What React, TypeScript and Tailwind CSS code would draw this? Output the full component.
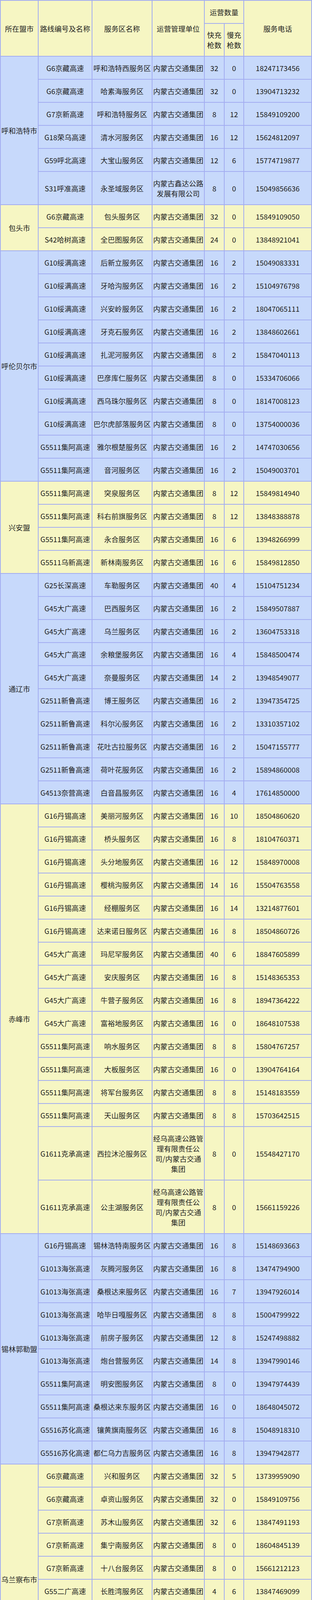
import React from 'react';

type Text = string | string[];
type Row = [string, string, Text, number, number, Text];

interface Region {
  name: string;
  tone: 'blue' | 'yellow';
  tall?: boolean;
  marked?: boolean;
  rows: Row[];
}

const JT = '内蒙古交通集团';
const JINGWU = ['经乌高速公路管', '理有限责任公', '司/内蒙古交通', '集团'];
const TAIBAO = ['鄂尔多斯市泰宝', '投资有限责任', '公司'];
const ZHENGHUI = ['鄂尔多斯市政汇', '公路管理有限', '公司'];
const XINCHI = ['鄂尔多斯市新驰', '路桥开发有限', '公司'];
const YANHUANG = ['鄂尔多斯市沿黄', '高等级公路建设', '开发有限公司'];

const regions: Region[] = [
  {
    name: '呼和浩特市',
    tone: 'blue',
    rows: [
      ['G6京藏高速', '呼和浩特西服务区', JT, 32, 0, '18247173456'],
      ['G6京藏高速', '哈素海服务区', JT, 32, 0, '13904713232'],
      ['G7京新高速', '呼和浩特服务区', JT, 8, 12, '15849109200'],
      ['G18荣乌高速', '清水河服务区', JT, 16, 12, '15624812097'],
      ['G59呼北高速', '大宝山服务区', JT, 12, 6, '15774719877'],
      ['S31呼准高速', '永圣域服务区', ['内蒙古鑫达公路', '发展有限公司'], 8, 0, '15049856636'],
    ],
  },
  {
    name: '包头市',
    tone: 'yellow',
    rows: [
      ['G6京藏高速', '包头服务区', JT, 32, 0, '15849109050'],
      ['S42哈树高速', '全巴图服务区', JT, 24, 0, '13848921041'],
    ],
  },
  {
    name: '呼伦贝尔市',
    tone: 'blue',
    rows: [
      ['G10绥满高速', '后新立服务区', JT, 16, 2, '15049083331'],
      ['G10绥满高速', '牙哈沟服务区', JT, 16, 2, '15104976798'],
      ['G10绥满高速', '兴安岭服务区', JT, 16, 2, '18047065111'],
      ['G10绥满高速', '牙克石服务区', JT, 16, 2, '13848602661'],
      ['G10绥满高速', '扎泥河服务区', JT, 8, 2, '15847040113'],
      ['G10绥满高速', '巴彦库仁服务区', JT, 8, 0, '15334706066'],
      ['G10绥满高速', '西乌珠尔服务区', JT, 8, 0, '18147008123'],
      ['G10绥满高速', '巴尔虎部落服务区', JT, 8, 0, '13754000036'],
      ['G5511集阿高速', '雅尔根楚服务区', JT, 16, 2, '14747030656'],
      ['G5511集阿高速', '音河服务区', JT, 16, 2, '15049003701'],
    ],
  },
  {
    name: '兴安盟',
    tone: 'yellow',
    rows: [
      ['G5511集阿高速', '突泉服务区', JT, 8, 12, '15849814940'],
      ['G5511集阿高速', '科右前旗服务区', JT, 8, 12, '13848388878'],
      ['G5511集阿高速', '永合服务区', JT, 16, 6, '13948266999'],
      ['G5511乌新高速', '新林南服务区', JT, 16, 6, '15849812850'],
    ],
  },
  {
    name: '通辽市',
    tone: 'blue',
    rows: [
      ['G25长深高速', '车勒服务区', JT, 40, 4, '15104751234'],
      ['G45大广高速', '巴西服务区', JT, 16, 2, '15849507887'],
      ['G45大广高速', '乌兰服务区', JT, 16, 2, '13604753318'],
      ['G45大广高速', '余粮堡服务区', JT, 16, 4, '15848500474'],
      ['G45大广高速', '奈曼服务区', JT, 14, 2, '13948549077'],
      ['G2511新鲁高速', '博王服务区', JT, 16, 2, '13947354725'],
      ['G2511新鲁高速', '科尔沁服务区', JT, 16, 2, '13310357102'],
      ['G2511新鲁高速', '花吐古拉服务区', JT, 16, 2, '15047155777'],
      ['G2511新鲁高速', '荷叶花服务区', JT, 16, 2, '15894860008'],
      ['G4513奈营高速', '白音昌服务区', JT, 16, 4, '17614850000'],
    ],
  },
  {
    name: '赤峰市',
    tone: 'yellow',
    rows: [
      ['G16丹锡高速', '美丽河服务区', JT, 16, 10, '18504860620'],
      ['G16丹锡高速', '桥头服务区', JT, 16, 8, '18104760371'],
      ['G16丹锡高速', '头分地服务区', JT, 16, 12, '15848970008'],
      ['G16丹锡高速', '樱桃沟服务区', JT, 14, 16, '15504763558'],
      ['G16丹锡高速', '经棚服务区', JT, 16, 14, '13214877601'],
      ['G16丹锡高速', '达来诺日服务区', JT, 16, 8, '18504860726'],
      ['G45大广高速', '玛尼罕服务区', JT, 40, 6, '18847605899'],
      ['G45大广高速', '安庆服务区', JT, 16, 8, '15148365353'],
      ['G45大广高速', '牛营子服务区', JT, 16, 8, '18947364222'],
      ['G45大广高速', '富裕地服务区', JT, 16, 0, '18648107538'],
      ['G5511集阿高速', '响水服务区', JT, 8, 8, '15804767257'],
      ['G5511集阿高速', '大板服务区', JT, 16, 0, '13904764164'],
      ['G5511集阿高速', '将军台服务区', JT, 8, 8, '15148183559'],
      ['G5511集阿高速', '天山服务区', JT, 8, 8, '15703642515'],
      ['G1611克承高速', '西拉沐沦服务区', JINGWU, 8, 0, '15548427170'],
      ['G1611克承高速', '公主湖服务区', JINGWU, 8, 0, '15661159226'],
    ],
  },
  {
    name: '锡林郭勒盟',
    tone: 'blue',
    rows: [
      ['G16丹锡高速', '锡林浩特南服务区', JT, 16, 8, '15148693663'],
      ['G1013海张高速', '灰腾河服务区', JT, 16, 8, '13474794900'],
      ['G1013海张高速', '桑根达来服务区', JT, 16, 7, '13947926014'],
      ['G1013海张高速', '哈毕日嘎服务区', JT, 8, 8, '15004799922'],
      ['G1013海张高速', '前房子服务区', JT, 12, 8, '15247498882'],
      ['G1013海张高速', '炮台营服务区', JT, 14, 8, '13947990146'],
      ['G5511集阿高速', '明安图服务区', JT, 8, 0, '13947974439'],
      ['G5511集阿高速', '桑根达来东服务区', JT, 16, 0, '18648045072'],
      ['G5516苏化高速', '镶黄旗南服务区', JT, 16, 8, '15048918310'],
      ['G5516苏化高速', '都仁乌力吉服务区', JT, 16, 8, '13947942877'],
    ],
  },
  {
    name: '乌兰察布市',
    tone: 'yellow',
    rows: [
      ['G6京藏高速', '兴和服务区', JT, 32, 5, '13739959090'],
      ['G6京藏高速', '卓资山服务区', JT, 32, 0, '15849109756'],
      ['G7京新高速', '苏木山服务区', JT, 32, 6, '13847491193'],
      ['G7京新高速', '集宁南服务区', JT, 8, 0, '18604845139'],
      ['G7京新高速', '十八台服务区', JT, 8, 0, '15661212123'],
      ['G55二广高速', '长胜湾服务区', JT, 4, 6, '13847469099'],
      ['G55二广高速', '黄家村服务区', JT, 4, 0, '15344230044'],
      ['G55二广高速', '丰镇服务区', JT, 8, 6, '13847430588'],
      ['G5511集阿高速', '商都西服务区', JT, 16, 0, '15848490707'],
      ['G5511集阿高速', '德包图服务区', JT, 8, 6, '15147479280'],
    ],
  },
  {
    name: '鄂尔多斯市',
    tone: 'blue',
    marked: true,
    rows: [
      ['G65包茂高速', '响沙湾服务区', JT, 32, 0, '13134862233'],
      ['G65包茂高速', '成陵服务区', JT, 16, 18, '15750634131'],
      ['G18荣乌高速', '沙圪堵服务区', TAIBAO, 8, 0, '15044913609'],
      ['G18荣乌高速', '包府服务区', TAIBAO, 8, 0, '15847725101'],
      ['G18荣乌高速', '泊江海服务区', ZHENGHUI, 14, 1, ['15754719422', '15894980090']],
      ['G18荣乌高速', '沙井服务区', ZHENGHUI, 10, 4, '15344048152'],
      ['G18荣乌高速', '框框井服务区', XINCHI, 4, 0, '15149438088'],
      ['G18荣乌高速', '三北羊场服务区', XINCHI, 4, 0, '15149438088'],
      ['S24兴巴高速', '十二连城服务区', YANHUANG, 8, 0, '15947738887'],
      ['S24兴巴高速', '展旦召服务区', YANHUANG, 4, 3, '15247710404'],
      ['S24兴巴高速', '中和西服务区', YANHUANG, 4, 3, '13669900003'],
      ['S24兴巴高速', '独贵塔拉服务区', YANHUANG, 0, 4, '18304772266'],
      ['S24兴巴高速', '吉日嘎朗图服务区', YANHUANG, 4, 3, '18048248832'],
      ['S24兴巴高速', '呼和木独服务区', YANHUANG, 0, 4, '18847137663'],
      ['S26纳龙高速', '哈沙图服务区', ['鄂尔多斯市交通', '投资有限公司敖', '东高速公路', '收费所'], 8, 0, '04773826808'],
      ['S31呼准高速', '海子塔服务区', ['鄂尔多斯市交通', '投资有限公司大', '龙高速公路', '收费所'], 8, 0, '13313409833'],
    ],
  },
  {
    name: '巴彦淖尔市',
    tone: 'yellow',
    rows: [
      ['G6京藏高速', '临河新区服务区', JT, 8, 10, ['17614716966', '18704936999']],
      ['G7京新高速', '青山服务区', JT, 16, 10, '15164876782'],
    ],
  },
  {
    name: '乌海市',
    tone: 'blue',
    rows: [
      ['G6京藏高速', '乌海服务区', JT, 8, 0, '13274739969'],
      ['G18荣乌高速', '拉僧庙服务区', JT, 16, 8, '15247103004'],
    ],
  },
  {
    name: '阿拉善盟',
    tone: 'yellow',
    tall: true,
    rows: [
      ['G7京新高速', '纳林湖服务区', JT, 16, 10, '17648131874'],
      ['G7京新高速', '红古尔玉林服务区', JT, 16, 4, '15048317775'],
      ['G7京新高速', '乌力吉服务区', JT, 16, 0, '13514837999'],
      ['G7京新高速', '呼和包斯格服务区', JT, 16, 0, '15924448654'],
      ['G7京新高速', '哈尔苏海服务区', JT, 16, 0, '13948008770'],
      ['G7京新高速', '雅干服务区', JT, 16, 4, '13948060456'],
      ['G7京新高速', '额济纳旗服务区', JT, 16, 0, '18604715455'],
      ['G7京新高速', '赛汉陶来服务区', JT, 16, 4, '18248307003'],
      ['G7京新高速', '风雷山服务区', JT, 16, 4, '13948042155'],
      ['G7京新高速', '黑鹰山服务区', JT, 16, 4, '13948062335'],
      ['G1817乌银高速', '宗别立服务区', JT, 8, 0, '13948023939'],
    ],
  },
];

const cell = 'flex shrink-0 items-center justify-center text-center border-r-2 border-b-2 border-[#a3adf1]';

function Lines({ value }: { value: Text }) {
  if (!Array.isArray(value)) return <>{value}</>;
  return (
    <span>
      {value.map((s, i) => (
        <React.Fragment key={i}>
          {i > 0 && <br />}
          {s}
        </React.Fragment>
      ))}
    </span>
  );
}

function Header() {
  return (
    <div className="flex h-[143px] bg-[#f6f6c3]">
      <div className={`${cell} w-[97px]`}>所在盟市</div>
      <div className={`${cell} w-[138px]`}>路线编号及名称</div>
      <div className={`${cell} w-[154px]`}>服务区名称</div>
      <div className={`${cell} w-[134px]`}>运营管理单位</div>
      <div className="flex w-[101px] shrink-0 flex-col">
        <div className={`${cell} h-[59px]`}>运营数量</div>
        <div className="flex flex-1">
          <div className={`${cell} w-[51px]`}>
            快充
            <br />
            枪数
          </div>
          <div className={`${cell} w-[50px]`}>
            慢充
            <br />
            枪数
          </div>
        </div>
      </div>
      <div className={`${cell} w-[174px]`}>服务电话</div>
    </div>
  );
}

function RegionBlock({ region }: { region: Region }) {
  const bg = region.tone === 'blue' ? 'bg-[#c7d9fb]' : 'bg-[#f6f6c3]';
  return (
    <div className={`relative flex ${bg}`}>
      <div className={`${cell} w-[97px]`}>{region.name}</div>
      <div className="flex flex-col">
        {region.rows.map((r, i) => (
          <div key={i} className={`flex ${region.tall ? 'h-[83px]' : ''}`}>
            <div className={`${cell} w-[138px] py-[15.5px]`}>{r[0]}</div>
            <div className={`${cell} w-[154px] py-[15.5px]`}>{r[1]}</div>
            <div className={`${cell} w-[134px] py-[15.5px]`}>
              <Lines value={r[2]} />
            </div>
            <div className={`${cell} w-[51px] py-[15.5px]`}>{r[3]}</div>
            <div className={`${cell} w-[50px] py-[15.5px]`}>{r[4]}</div>
            <div className={`${cell} w-[174px] py-[15.5px]`}>
              <Lines value={r[5]} />
            </div>
          </div>
        ))}
      </div>
      {region.marked && (
        <div className="pointer-events-none absolute -left-[2px] right-0 -top-[10px] -bottom-[2px] border-[5px] border-[#c00000]" />
      )}
    </div>
  );
}

export default function App() {
  return (
    <div className="h-[7306px] w-[800px] overflow-hidden bg-[#c7d9fb] font-['Noto_Sans_CJK_SC','Noto_Sans',sans-serif] text-[18.4px] leading-[26px] text-[#1e1e1e]">
      <div className="border-l-2 border-t-2 border-[#a3adf1]">
        <Header />
        {regions.map((r) => (
          <RegionBlock key={r.name} region={r} />
        ))}
      </div>
    </div>
  );
}
